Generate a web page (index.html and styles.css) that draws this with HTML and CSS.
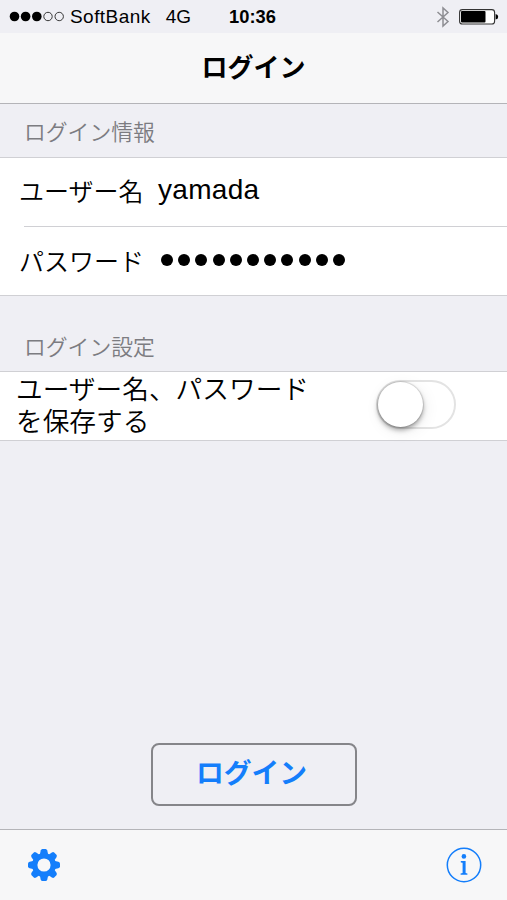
FILE: index.html
```html
<!DOCTYPE html>
<html lang="ja">
<head>
    <meta charset="UTF-8">
    <meta name="viewport" content="width=device-width, initial-scale=1.0">
    <title>ログイン</title>
    <link rel="stylesheet" href="styles.css">
</head>
<body>
    <div class="status-bar">
        <div class="status-left">
            <svg class="signal" width="56" height="12" viewBox="0 0 56 12">
                <circle cx="5.5" cy="5.5" r="4.8"/>
                <circle cx="16.6" cy="5.5" r="4.8"/>
                <circle cx="27.8" cy="5.5" r="4.8"/>
                <circle class="empty" cx="39" cy="5.5" r="4.2"/>
                <circle class="empty" cx="50.2" cy="5.5" r="4.2"/>
            </svg>
            <span class="carrier">SoftBank</span>
            <span class="network">4G</span>
        </div>
        <div class="clock">10:36</div>
        <div class="status-right">
            <svg class="bluetooth" width="14" height="22" viewBox="0 0 14 22">
                <path d="M1.5 6 L12 15.5 L7 20 V2 L12 6.5 L1.5 16"/>
            </svg>
            <svg class="battery" width="40" height="16" viewBox="0 0 40 16">
                <rect class="case" x="0.6" y="0.6" width="35" height="14.4" rx="2.8"/>
                <rect x="2" y="2" width="24.5" height="11.6" rx="1"/>
                <path d="M36.6 5 Q39.2 5.4 39.2 7.8 Q39.2 10.2 36.6 10.6 Z"/>
            </svg>
        </div>
    </div>

    <header class="nav-bar">
        <h1>ログイン</h1>
    </header>

    <main>
        <h2 class="section-title">ログイン情報</h2>
        <div class="group">
            <div class="row user-row">
                <span class="label">ユーザー名</span>
                <span class="value">yamada</span>
            </div>
            <div class="row password-row">
                <span class="label">パスワード</span>
                <span class="password">
                    <i></i><i></i><i></i><i></i><i></i><i></i><i></i><i></i><i></i><i></i><i></i>
                </span>
            </div>
        </div>

        <h2 class="section-title settings-title">ログイン設定</h2>
        <div class="group save-row">
            <span class="save-label">ユーザー名、パスワード<br>を保存する</span>
            <span class="switch"><span class="knob"></span></span>
        </div>

        <button class="login">ログイン</button>
    </main>

    <footer class="toolbar">
        <svg class="gear" width="34" height="34" viewBox="-17 -17 34 34">
            <circle class="ring" r="9.3"/>
            <g id="teeth">
                <path id="tooth" d="M-4 -11 L-3.3 -14.4 Q-2.8 -16 -1.6 -16 H1.6 Q2.8 -16 3.3 -14.4 L4 -11 Z"/>
                <use href="#tooth" transform="rotate(45)"/>
                <use href="#tooth" transform="rotate(90)"/>
                <use href="#tooth" transform="rotate(135)"/>
                <use href="#tooth" transform="rotate(180)"/>
                <use href="#tooth" transform="rotate(225)"/>
                <use href="#tooth" transform="rotate(270)"/>
                <use href="#tooth" transform="rotate(315)"/>
            </g>
        </svg>
        <svg class="info" width="36" height="36" viewBox="0 0 36 36">
            <circle class="outline" cx="18" cy="18" r="16.7"/>
            <circle cx="17.9" cy="9.4" r="2.3"/>
            <path d="M14.8 14 H19.6 V26 L21.4 26.5 V27.7 H14.6 V26.5 L16.6 26 V15.8 L14.8 15.4 Z"/>
        </svg>
    </footer>
</body>
</html>
```

FILE: styles.css
```css
* {
    box-sizing: border-box;
}
body {
    margin: 0;
    height: 900px;
    display: flex;
    flex-direction: column;
    overflow: hidden;
    background-color: #efeff4;
    color: #000;
    font-family: "Liberation Sans", "Noto Sans CJK JP", sans-serif;
}
h1, h2 {
    margin: 0;
}
svg {
    display: block;
}

/* status bar */
.status-bar {
    height: 33px;
    flex: none;
    display: grid;
    grid-template-columns: 1fr auto 1fr;
    align-items: center;
    padding: 0 8px 0 9px;
    font-size: 19px;
}
.status-left, .status-right {
    display: flex;
    align-items: center;
}
.status-right {
    justify-content: flex-end;
    gap: 9px;
}
.signal .empty {
    fill: none;
    stroke: #222;
    stroke-width: 0.9;
}
.carrier {
    margin-left: 5px;
    letter-spacing: 0.45px;
}
.network {
    margin-left: 15px;
}
.clock {
    margin-right: 3px;
    font-weight: bold;
    font-size: 18.3px;
}
.bluetooth path {
    fill: none;
    stroke: #8e8e93;
    stroke-width: 1.5;
}
.battery .case {
    fill: #fff;
    stroke: #333;
    stroke-width: 1.1;
}

/* title */
.nav-bar {
    height: 71px;
    flex: none;
    display: flex;
    align-items: center;
    justify-content: center;
    background-color: #f7f7f8;
    border-bottom: 1px solid #b4b4b8;
}
.nav-bar h1 {
    font-size: 26px;
    line-height: 38px;
}

/* form */
main {
    flex: 1;
    display: flex;
    flex-direction: column;
}
.section-title {
    height: 53px;
    padding: 13px 24px 0;
    font-size: 21.8px;
    line-height: 32px;
    font-weight: 350;
    color: #7c7c81;
}
.settings-title {
    height: 75px;
    padding-top: 36px;
}
.group {
    background-color: #fff;
    border-top: 1px solid #d0d0d4;
    border-bottom: 1px solid #d0d0d4;
}
.row {
    display: flex;
    align-items: center;
    height: 69px;
    padding: 0 0 5px 19px;
}
.password-row {
    position: relative;
    height: 68px;
    padding-bottom: 3px;
}
.password-row::before {
    content: "";
    position: absolute;
    top: -1px;
    left: 24px;
    right: 0;
    border-top: 1px solid #d0d0d4;
}
.label {
    width: 139px;
    font-size: 25px;
    font-weight: 350;
}
.value {
    font-size: 28px;
    letter-spacing: 0.3px;
}
.password {
    display: flex;
    gap: 5.2px;
    padding-left: 3px;
}
.password i {
    width: 12px;
    height: 12px;
    border-radius: 50%;
    background-color: #000;
}
.save-row {
    display: flex;
    align-items: center;
    justify-content: space-between;
    height: 70px;
    padding: 0 51px 0 16px;
}
.save-label {
    font-size: 26.7px;
    line-height: 32px;
    font-weight: 350;
}
.switch {
    width: 80px;
    height: 49px;
    margin-top: -3px;
    border: 2px solid #e3e3e3;
    border-radius: 25px;
}
.knob {
    display: block;
    width: 45px;
    height: 45px;
    border-radius: 50%;
    background-color: #fff;
    box-shadow: 0 3px 5px rgba(0, 0, 0, 0.35), 0 0 1px 1px rgba(0, 0, 0, 0.12), 2px 4px 16px rgba(0, 0, 0, 0.08);
}
.login {
    width: 206px;
    height: 63px;
    margin: auto auto 23px;
    padding: 0 4px 7px 0;
    border: 2px solid #858589;
    border-radius: 8px;
    background: none;
    color: #147efb;
    font-family: inherit;
    font-size: 27.8px;
    font-weight: bold;
}

/* bottom toolbar */
.toolbar {
    height: 71px;
    flex: none;
    display: flex;
    align-items: center;
    justify-content: space-between;
    padding: 0 25px 0 27px;
    background-color: #f7f7f8;
    border-top: 1px solid #b4b4b8;
}
.gear {
    fill: #147efb;
}
.gear .ring {
    fill: none;
    stroke: #147efb;
    stroke-width: 5.4;
}
.info {
    fill: #147efb;
}
.info .outline {
    fill: none;
    stroke: #147efb;
    stroke-width: 1.5;
}
```
